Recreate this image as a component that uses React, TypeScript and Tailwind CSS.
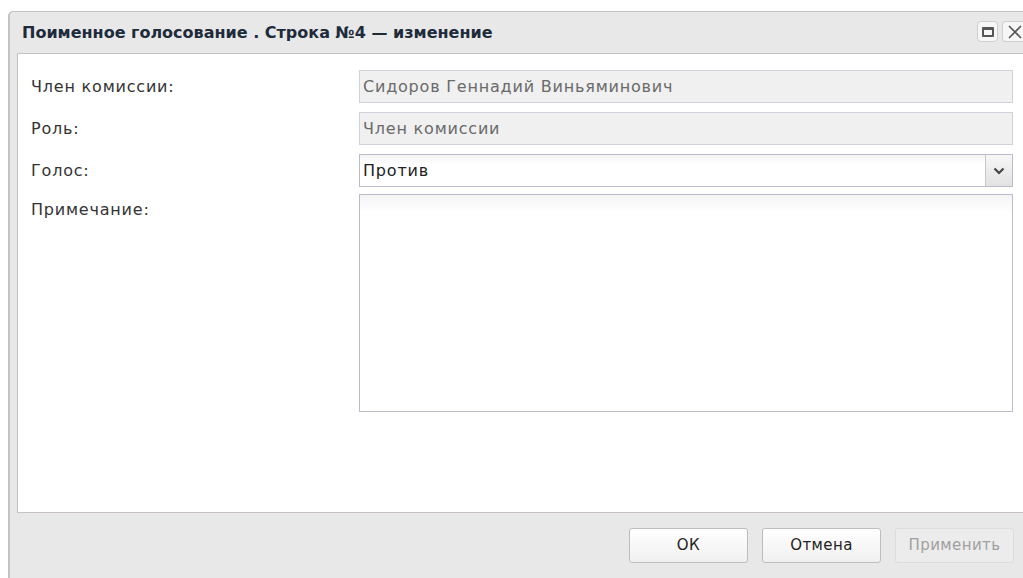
import React from 'react';

const font = { fontFamily: '"DejaVu Sans", Verdana, sans-serif' };

const ReadOnlyField: React.FC<{ value: string }> = ({ value }) => (
  <div className="h-[33px] w-[654px] flex items-center px-[3px] bg-[#f0f0f0] border border-[#cfd2da] text-[16px] tracking-[0.8px] text-[#6a6a6a]">
    {value}
  </div>
);

const Label: React.FC<{ text: string; className?: string }> = ({ text, className = '' }) => (
  <div className={`w-[328px] text-[16px] tracking-[0.8px] text-[#333] ${className}`}>{text}</div>
);

const Button: React.FC<{ text: string; disabled?: boolean }> = ({ text, disabled }) => (
  <button
    className={`w-[119px] h-[35px] rounded-[3px] border text-[15px] tracking-[0.4px] ${
      disabled
        ? 'border-[#dcdcdc] bg-[#ececec] text-[#a0a0a0]'
        : 'border-[#bdbdbd] bg-gradient-to-b from-white to-[#f0f0f0] text-[#222]'
    }`}
  >
    {text}
  </button>
);

export default function App() {
  return (
    <div className="w-[1023px] h-[578px] bg-white overflow-hidden" style={font}>
      <div className="ml-[8px] mt-[11px] w-[1015px] h-[567px] flex flex-col bg-[#e8e8e8] border-l-[2px] border-t border-[#c3c3c3] rounded-tl-[5px]">
        {/* Title bar */}
        <div className="h-[41px] flex items-center pl-[12px] pr-0">
          <div className="flex-1 text-[16px] font-bold text-[#1d2b3b]">
            Поименное голосование . Строка №4 — изменение
          </div>
          <div className="flex items-center gap-[4px] mt-[-2px]">
            <div className="w-[21px] h-[21px] rounded-[4px] border border-[#cfcfcf] bg-[#f6f6f6] flex items-center justify-center">
              <div className="w-[12px] h-[10px] border-[2px] border-t-[3px] border-[#555] rounded-[1px]" />
            </div>
            <div className="w-[21px] h-[21px] rounded-l-[4px] border border-r-0 border-[#cfcfcf] bg-[#f6f6f6] flex items-center justify-end">
              <svg width="16" height="14" viewBox="0 0 16 14">
                <path d="M2 1 L14 13 M14 1 L2 13" stroke="#555" strokeWidth="1.6" />
              </svg>
            </div>
          </div>
        </div>

        {/* Form body */}
        <div className="ml-[7px] h-[460px] bg-white border border-r-0 border-[#c7c2c0] pt-[16px] pl-[13px]">
          <div className="flex items-center mb-[9px]">
            <Label text="Член комиссии:" />
            <ReadOnlyField value="Сидоров Геннадий Виньяминович" />
          </div>
          <div className="flex items-center mb-[9px]">
            <Label text="Роль:" />
            <ReadOnlyField value="Член комиссии" />
          </div>
          <div className="flex items-center mb-[7px]">
            <Label text="Голос:" />
            <div className="h-[33px] w-[654px] flex border border-[#b9bccb] bg-gradient-to-b from-[#f4f4f4] to-white to-[30%]">
              <div className="flex-1 flex items-center px-[3px] text-[16px] tracking-[0.8px] text-[#222]">Против</div>
              <div className="w-[27px] border-l border-[#c8c8c8] bg-gradient-to-b from-[#f7f7f7] to-[#e2e2e2] flex items-center justify-center">
                <svg width="12" height="8" viewBox="0 0 12 8">
                  <path d="M1.5 1.5 L6 6 L10.5 1.5" fill="none" stroke="#444" strokeWidth="2.2" />
                </svg>
              </div>
            </div>
          </div>
          <div className="flex items-start">
            <Label text="Примечание:" className="pt-[4px]" />
            <div className="h-[218px] w-[654px] border border-[#b9bccb] bg-gradient-to-b from-[#f4f4f4] to-white to-[8%]" />
          </div>
        </div>

        {/* Footer buttons */}
        <div className="flex-1 flex items-start justify-end gap-[14px] pt-[15px] pr-[9px]">
          <Button text="ОК" />
          <Button text="Отмена" />
          <Button text="Применить" disabled />
        </div>
      </div>
    </div>
  );
}
